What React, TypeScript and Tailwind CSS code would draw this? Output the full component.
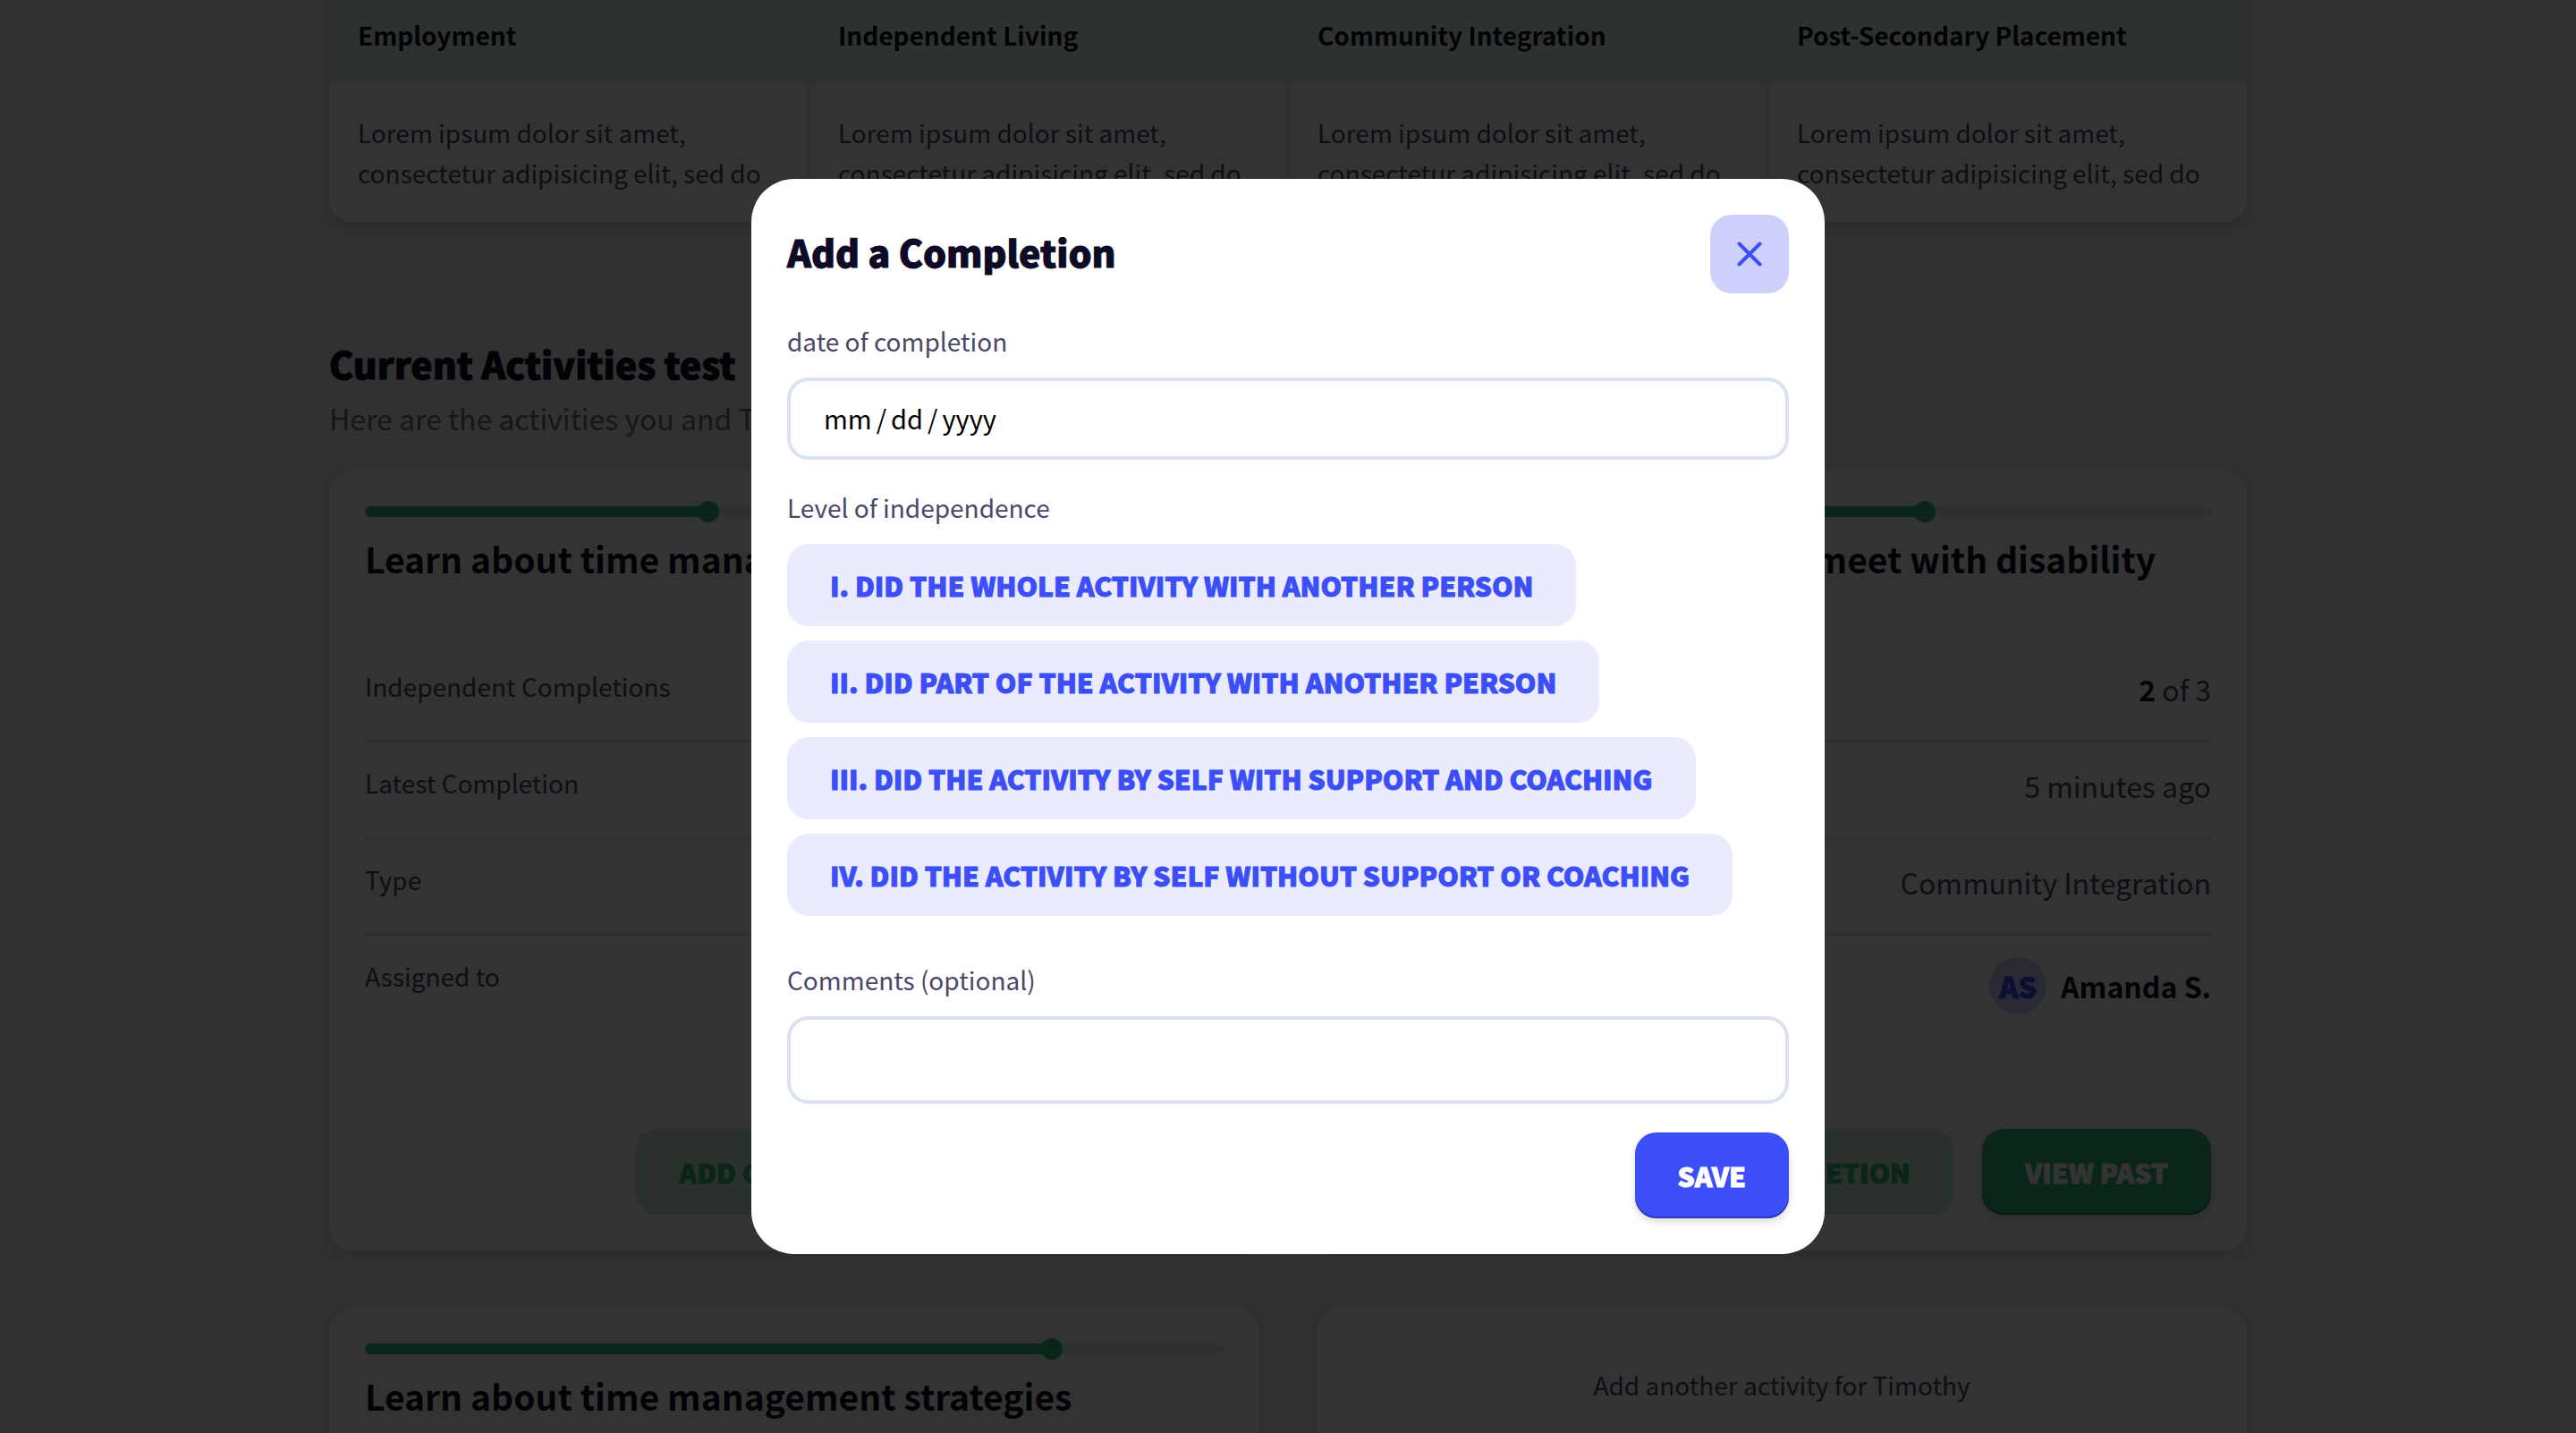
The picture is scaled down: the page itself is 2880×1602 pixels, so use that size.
import React from "react";

const goals = ["Employment", "Independent Living", "Community Integration", "Post-Secondary Placement"];

const levels = [
  "I. Did the whole activity with another person",
  "II. Did part of the activity with another person",
  "III. Did the activity by self with support and coaching",
  "IV. Did the activity by self without support or coaching",
];

type Activity = {
  title: string;
  progress: number;
  done: number;
  total: number;
  latest: string;
  type: string;
};

const activities: Activity[] = [
  { title: "Learn about time management strategies", progress: 40, done: 2, total: 5, latest: "5 minutes ago", type: "Employment" },
  { title: "Schedule appointments to meet with disability services", progress: 66.67, done: 2, total: 3, latest: "5 minutes ago", type: "Community Integration" },
  { title: "Learn about time management strategies", progress: 80, done: 4, total: 5, latest: "5 minutes ago", type: "Independent Living" },
];

const cardClass = "rounded-3xl bg-white shadow-[0_4px_12px_rgba(0,0,0,0.15)]";
const heavy = "font-black [-webkit-text-stroke:1px_currentColor]";
const buttonClass = `h-24 rounded-3xl px-12 text-[30px] uppercase ${heavy}`;

function Progress({ value }: { value: number }) {
  return (
    <div role="progressbar" aria-valuenow={value} className="h-3 rounded-full bg-[#ebedf5]">
      <div className="relative h-3 rounded-full bg-[#32be7d]" style={{ width: `${value}%` }}>
        <span className="absolute -top-1.5 -right-3 size-6 rounded-full bg-[#32be7d]" />
      </div>
    </div>
  );
}

function Row({ label, last, children }: { label: string; last?: boolean; children: React.ReactNode }) {
  return (
    <div className={last ? "flex justify-between" : "flex h-[108px] justify-between border-b-2 border-[#e6e6f0]"}>
      <dt className="pt-[22px] text-[28px] leading-[46px]">{label}</dt>
      <dd className={last ? "flex items-center gap-4 pt-6" : "pt-[22px] text-[32px] leading-[52px]"}>{children}</dd>
    </div>
  );
}

function ActivityCard({ activity }: { activity: Activity }) {
  return (
    <article className={`${cardClass} p-10`}>
      <Progress value={activity.progress} />
      <h3 className="mt-5 mb-5 h-[104px] text-[39px] leading-[52px] font-bold text-[#0d0b26]">{activity.title}</h3>
      <dl>
        <Row label="Independent Completions">
          <b className="text-[#0d0b26]">{activity.done}</b> of {activity.total}
        </Row>
        <Row label="Latest Completion">{activity.latest}</Row>
        <Row label="Type">{activity.type}</Row>
        <Row label="Assigned to" last>
          <span className={`flex size-16 items-center justify-center rounded-full bg-[#cfd1fd] text-[32px] text-[#3b4ef7] ${heavy}`}>AS</span>
          <b className="text-[32px] leading-[52px] text-[#0d0b26]">Amanda S.</b>
        </Row>
      </dl>
      <div className="mt-32 flex justify-end gap-8">
        <button className={`${buttonClass} bg-[#d0efdd] text-[#32be7d]`}>Add completion</button>
        <button className={`${buttonClass} bg-[#32be7d] text-white shadow-[inset_0_-2px_0_#1f7a50,0_4px_8px_rgba(0,0,0,0.15)]`}>View past</button>
      </div>
    </article>
  );
}

function Dialog() {
  return (
    <div className="fixed inset-0 flex items-center justify-center bg-black/80">
      <form
        role="dialog"
        aria-labelledby="dialog-title"
        onSubmit={(e) => e.preventDefault()}
        className="w-full max-w-[1200px] rounded-[48px] bg-white p-10"
      >
        <header className="flex h-[88px] items-center justify-between">
          <h2 id="dialog-title" className={`pb-1.5 text-[41px] leading-[60px] text-[#0d0b26] ${heavy}`}>Add a Completion</h2>
          <button type="button" aria-label="Close" className="flex size-[88px] items-center justify-center rounded-3xl bg-[#cfd1fd] text-[#3b4ef7]">
            <svg viewBox="0 0 28 28" className="size-7" fill="none" stroke="currentColor" strokeWidth="4" strokeLinecap="round">
              <path d="M2.5 2.5l23 23M25.5 2.5l-23 23" />
            </svg>
          </button>
        </header>

        <label htmlFor="date" className="mt-8 mb-5 block text-[28px] leading-[42px]">date of completion</label>
        <input
          id="date"
          type="date"
          className="block h-[92px] w-full rounded-3xl border-4 border-[#dbe1f1] px-9 text-[29px] text-black [&::-webkit-calendar-picker-indicator]:hidden [&::-webkit-datetime-edit-text]:px-1"
        />

        <fieldset>
          <legend className="mb-5 pt-8 text-[28px] leading-[42px]">Level of independence</legend>
          <div className="flex flex-col items-start gap-4">
            {levels.map((level) => (
              <button key={level} type="button" className={`h-[92px] rounded-3xl bg-[#eaebfe] px-12 text-[30px] whitespace-nowrap text-[#3b4ef7] uppercase ${heavy}`}>
                {level}
              </button>
            ))}
          </div>
        </fieldset>

        <label htmlFor="comments" className="mt-[50px] mb-5 block text-[28px] leading-[42px]">Comments (optional)</label>
        <input id="comments" type="text" className="block h-[98px] w-full rounded-3xl border-4 border-[#dbe1f1] px-9 text-[29px] text-black" />

        <div className="mt-8 flex justify-end">
          <button type="submit" className={`${buttonClass} bg-[#3b4ef7] text-white shadow-[inset_0_-2px_0_#2a38b8,0_4px_8px_rgba(0,0,0,0.15)]`}>Save</button>
        </div>
      </form>
    </div>
  );
}

export default function App() {
  return (
    <div className="h-screen overflow-hidden bg-[#f2f2f4] font-['Noto_Sans_CJK_SC',sans-serif] text-[#4a4869]">
      <main className="mx-auto max-w-[2144px]">
        <div className="overflow-hidden rounded-b-3xl bg-white shadow-[0_4px_12px_rgba(0,0,0,0.15)]">
          <table className="w-full table-fixed text-left text-[28px] leading-[45px]">
            <thead className="bg-[#e2f5ed] text-[#0d0b26]">
              <tr>
                {goals.map((goal) => (
                  <th key={goal} className="border-r-2 border-[#e0e0ee] px-8 pt-[17px] pb-8 font-bold last:border-r-0">{goal}</th>
                ))}
              </tr>
            </thead>
            <tbody>
              <tr>
                {goals.map((goal) => (
                  <td key={goal} className="border-r-2 border-[#e0e0ee] px-8 py-8 last:border-r-0">
                    Lorem ipsum dolor sit amet, consectetur adipisicing elit, sed do
                  </td>
                ))}
              </tr>
            </tbody>
          </table>
        </div>

        <h2 className={`mt-32 text-[41px] leading-[60px] text-[#0d0b26] ${heavy}`}>Current Activities test</h2>
        <p className="mt-1 text-[32px] leading-[54px] text-[#6b7280]">Here are the activities you and Timothy are working on.</p>

        <div className="mt-8 grid grid-cols-2 gap-16">
          {activities.map((activity, i) => (
            <ActivityCard key={i} activity={activity} />
          ))}
          <section className={`${cardClass} px-10 py-16 text-center text-[28px] leading-[45px]`}>
            Add another activity for Timothy
          </section>
        </div>
      </main>
      <Dialog />
    </div>
  );
}
